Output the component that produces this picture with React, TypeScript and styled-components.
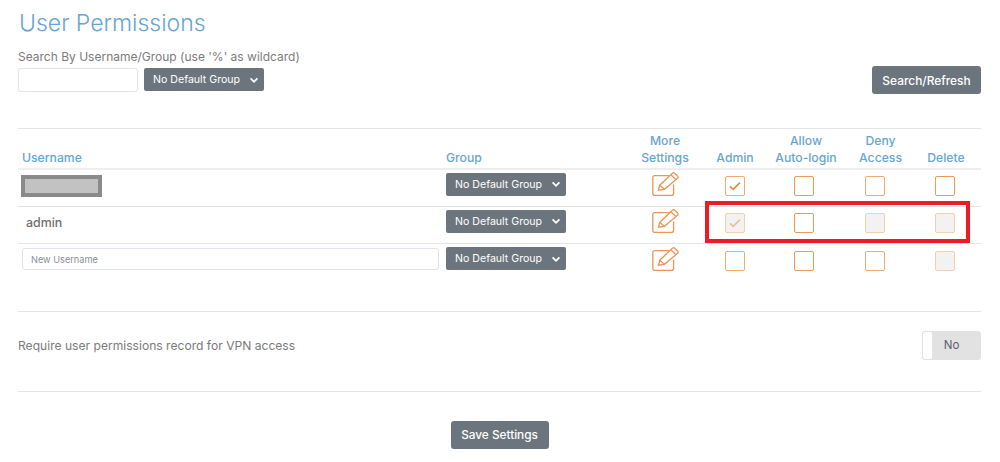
import React from "react";
import styled, { createGlobalStyle } from "styled-components";

const Global = createGlobalStyle`
  html, body { margin: 0; padding: 0; background: #fff; }
  body { font-family: Inter, "Open Sans", "Liberation Sans", sans-serif; color: #6c757d; }
  * { box-sizing: border-box; }
`;

const Page = styled.div`
  position: relative;
  width: 1000px;
  height: 462px;
  overflow: hidden;
  padding: 8px 19px 0 18px;
`;

const Title = styled.h1`
  margin: 0 0 0 1px;
  font-size: 23px;
  line-height: 30px;
  font-weight: 300;
  color: #66a5d2;
`;

const SearchLabel = styled.div`
  margin-top: 11px;
  font-size: 12px;
  line-height: 16px;
  color: #7b7b7b;
`;

const SearchBar = styled.div`
  display: flex;
  align-items: center;
  justify-content: space-between;
  height: 27px;
  margin-top: 1px;
`;

const SearchLeft = styled.div`
  display: flex;
  align-items: center;
  gap: 6px;
`;

const TextInput = styled.input<{ $w: number; $h: number }>`
  width: ${(p) => p.$w}px;
  height: ${(p) => p.$h}px;
  border: 1px solid #dfe3ea;
  border-radius: 3px;
  background: #fff;
  padding: 0 8px;
  font-family: inherit;
  font-size: 9.2px;
  outline: none;
  &::placeholder { color: #8a8f96; opacity: 1; }
`;

const SelectBox = styled.div`
  display: flex;
  align-items: center;
  justify-content: space-between;
  width: 120px;
  height: 23px;
  padding: 0 5px 0 9px;
  background: #6c757d;
  border-radius: 2px;
  color: #fff;
  font-size: 10.6px;
  white-space: nowrap;
`;

const Button = styled.button`
  height: 28px;
  border: 0;
  border-radius: 3px;
  background: #6c757d;
  color: #fff;
  font-family: inherit;
  font-weight: 500;
  padding: 0;
`;

const SearchButton = styled(Button)`
  width: 109px;
  margin-top: 1px;
  font-size: 11.9px;
`;

const Rule = styled.hr`
  margin: 0;
  border: 0;
  border-top: 1px solid #e4e4e4;
`;

const TableTop = styled(Rule)`
  margin-top: 35px;
`;

const GridRow = styled.div<{ $h: number; $heavy?: boolean; $last?: boolean }>`
  display: grid;
  grid-template-columns: 424px 188px 70px 70px 68px 74px 66px;
  height: ${(p) => p.$h}px;
  align-items: center;
  padding-bottom: 4px;
  border-bottom: ${(p) =>
    p.$last ? "0" : p.$heavy ? "2px solid #eeeeee" : "1px solid #e4e4e4"};
`;

const HeaderRow = styled(GridRow)`
  align-items: end;
  padding-bottom: 2px;
`;

const HeadCell = styled.div<{ $shift?: number }>`
  color: #66a5d2;
  font-size: 12.2px;
  line-height: 17px;
  font-weight: 500;
  text-align: left;
  padding-left: 4px;
`;

const CenterHead = styled(HeadCell)`
  text-align: center;
  padding-left: ${(p) => p.$shift ?? 0}px;
`;

const Cell = styled.div`
  display: flex;
  justify-content: center;
  align-items: center;
`;

const IconCell = styled(Cell)`
  margin-bottom: 4px;
`;

const GroupCell = styled(Cell)`
  justify-content: flex-start;
  padding-left: 4px;
  margin-bottom: 4px;
`;

const NameCell = styled(Cell)`
  justify-content: flex-start;
  padding-left: 8px;
  margin-bottom: 2px;
  font-size: 12.4px;
  font-weight: 500;
  color: #6f6f6f;
`;

const InputCell = styled(Cell)`
  justify-content: flex-start;
  padding-left: 4px;
  margin-bottom: 3px;
`;

const RedactedCell = styled(Cell)`
  justify-content: flex-start;
  padding-left: 3px;
`;

const Redacted = styled.div`
  width: 81px;
  height: 22px;
  background: #c2c2c2;
  border: 4px solid #8a8a8a;
`;

const Check = styled.span<{ $disabled?: boolean; $strong?: boolean }>`
  display: flex;
  align-items: center;
  justify-content: center;
  width: 20px;
  height: 20px;
  border-radius: 2px;
  border: 1px solid ${(p) => (p.$disabled ? "#f5cfae" : p.$strong ? "#ec9a55" : "#efab74")};
  background: ${(p) => (p.$disabled ? "#f2f2f2" : "#fff")};
`;

const Spacer = styled.div<{ $h: number }>`
  height: ${(p) => p.$h}px;
`;

const SettingRow = styled.div`
  display: flex;
  align-items: center;
  justify-content: space-between;
  height: 79px;
  font-size: 12.1px;
  color: #7b7b7b;
`;

const SettingText = styled.span`
  margin-top: -13px;
`;

const Toggle = styled.div`
  display: flex;
  width: 59px;
  height: 29px;
  margin-top: -13px;
  border: 1px solid #e2e2e2;
  border-radius: 3px;
  background: #e2e2e2;
  overflow: hidden;
`;

const ToggleKnob = styled.span`
  width: 9px;
  background: #fff;
  border-radius: 2px;
`;

const ToggleText = styled.span`
  flex: 1;
  display: flex;
  align-items: center;
  justify-content: center;
  padding-right: 9px;
  font-size: 11.6px;
  color: #5f5f70;
`;

const Footer = styled.div`
  display: flex;
  justify-content: center;
  margin-top: 29px;
`;

const SaveButton = styled(Button)`
  width: 98px;
  font-size: 11.8px;
`;

const Highlight = styled.div`
  position: absolute;
  left: 705px;
  top: 201px;
  width: 265px;
  height: 42px;
  border: 4px solid #ed1c24;
  pointer-events: none;
`;

const Chevron = () => (
  <svg width="10" height="10" viewBox="0 0 10 10" fill="none">
    <path d="M1.6 3.4 5 6.8l3.4-3.4" stroke="#fff" strokeWidth="1.8" />
  </svg>
);

const Select = () => (
  <SelectBox>
    No Default Group
    <Chevron />
  </SelectBox>
);

const Tick = ({ faded }: { faded?: boolean }) => (
  <svg width="12" height="10" viewBox="0 0 12 10" fill="none">
    <path
      d="M1 5.4 4.2 8.4 11 1.6"
      stroke={faded ? "#f0bd94" : "#e8883e"}
      strokeWidth="1.6"
    />
  </svg>
);

const EditIcon = () => (
  <svg width="27" height="24" viewBox="0 0 27 24" fill="none" stroke="#ec9556" strokeWidth="1.3">
    <path d="M17 3.6H2.6A1.8 1.8 0 0 0 .8 5.4v16.2a1.8 1.8 0 0 0 1.8 1.8h17.2a1.8 1.8 0 0 0 1.8-1.8V12.5" />
    <path d="M6.4 18.2l1.4-5L20.4 1.2a1.6 1.6 0 0 1 2.3 0l2.9 2.8a1.6 1.6 0 0 1 0 2.3L12.4 17.3z" />
    <path d="M7.8 13.2l4.6 4.1M18.9 2.7l4.7 4.7" />
  </svg>
);

type Box = { checked?: boolean; disabled?: boolean; strong?: boolean };

const Boxes = ({ items }: { items: Box[] }) => (
  <>
    <IconCell>
      <EditIcon />
    </IconCell>
    {items.map((b, i) => (
      <Cell key={i}>
        <Check $disabled={b.disabled} $strong={b.strong}>
          {b.checked && <Tick faded={b.disabled} />}
        </Check>
      </Cell>
    ))}
  </>
);

export default function App() {
  return (
    <Page>
      <Global />
      <Title>User Permissions</Title>
      <SearchLabel>Search By Username/Group (use '%' as wildcard)</SearchLabel>
      <SearchBar>
        <SearchLeft>
          <TextInput $w={120} $h={24} />
          <Select />
        </SearchLeft>
        <SearchButton>Search/Refresh</SearchButton>
      </SearchBar>
      <TableTop />
      <HeaderRow $h={41} $heavy>
        <HeadCell>Username</HeadCell>
        <HeadCell>Group</HeadCell>
        <CenterHead>More<br />Settings</CenterHead>
        <CenterHead>Admin</CenterHead>
        <CenterHead $shift={4}>Allow<br />Auto-login</CenterHead>
        <CenterHead $shift={11}>Deny<br />Access</CenterHead>
        <CenterHead $shift={2}>Delete</CenterHead>
      </HeaderRow>
      <GridRow $h={37}>
        <RedactedCell><Redacted /></RedactedCell>
        <GroupCell><Select /></GroupCell>
        <Boxes items={[{ checked: true }, { strong: true }, {}, { strong: true }]} />
      </GridRow>
      <GridRow $h={37}>
        <NameCell>admin</NameCell>
        <GroupCell><Select /></GroupCell>
        <Boxes items={[{ checked: true, disabled: true }, { strong: true }, { disabled: true }, { disabled: true }]} />
      </GridRow>
      <GridRow $h={37} $last>
        <InputCell><TextInput $w={417} $h={22} placeholder="New Username" /></InputCell>
        <GroupCell><Select /></GroupCell>
        <Boxes items={[{}, { strong: true }, {}, { disabled: true }]} />
      </GridRow>
      <Spacer $h={30} />
      <Rule />
      <SettingRow>
        <SettingText>Require user permissions record for VPN access</SettingText>
        <Toggle>
          <ToggleKnob />
          <ToggleText>No</ToggleText>
        </Toggle>
      </SettingRow>
      <Rule />
      <Footer>
        <SaveButton>Save Settings</SaveButton>
      </Footer>
      <Highlight />
    </Page>
  );
}
